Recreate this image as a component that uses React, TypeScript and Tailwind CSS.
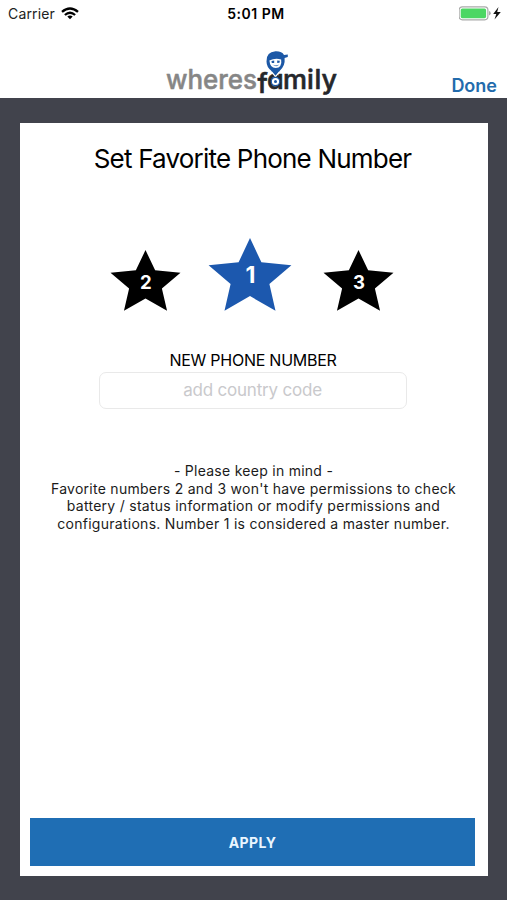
import { useState } from "react";

interface FavoriteStarProps {
  slot: number;
  active: boolean;
  onSelect: (slot: number) => void;
}

// Five-pointed star with its slot number; the active one is larger and blue.
function FavoriteStar({ slot, active, onSelect }: FavoriteStarProps) {
  return (
    <button
      type="button"
      onClick={() => onSelect(slot)}
      className={active ? "mr-1 h-[73px] w-[84px]" : "h-[61px] w-[71px]"}
    >
      <svg viewBox="0 0 84 72" preserveAspectRatio="none" className="block h-full w-full">
        <path
          d="M42 0 L53.4 24 L83.4 26.8 L61.4 45.3 L67.5 71.8 L42 57.3 L16.5 71.8 L22.6 45.3 L0.6 26.8 L30.6 24 Z"
          fill={active ? "#1c58ae" : "#000"}
        />
        <text
          x="42.5"
          y={active ? 44.5 : 45.5}
          fill="#fff"
          textAnchor="middle"
          className={
            active
              ? "font-['Inter',sans-serif] text-[23px] font-bold"
              : "font-['Inter',sans-serif] text-[22px] font-bold"
          }
        >
          {slot}
        </text>
      </svg>
    </button>
  );
}

function WifiIcon() {
  return (
    <svg viewBox="0 0 18 13" className="h-[13px] w-[18px]" fill="none" stroke="#000" strokeWidth="2.3">
      <path d="M1 4.9 Q9 -2 17 4.9" />
      <path d="M3.9 8 Q9 3.5 14.1 8" />
      <path d="M9 12.3 L6.3 9.6 Q9 7.5 11.7 9.6 Z" fill="#000" stroke="none" />
    </svg>
  );
}

function BatteryIcon() {
  return (
    <svg viewBox="0 0 44 15" className="h-[15px] w-[44px]">
      <rect x="0.1" y="0.8" width="28.8" height="13" rx="3.2" fill="#fff" stroke="#a9aaa9" strokeWidth="1.2" />
      <rect x="1.7" y="2.4" width="25.4" height="9.8" rx="1.6" fill="#4cd763" />
      <path d="M30 5 Q31.8 5.6 31.8 7.2 Q31.8 8.8 30 9.4 Z" fill="#a9aaa9" />
      <path d="M39.5 1 L34.2 7.9 L37.3 7.9 L35.5 13.6 L41.8 6.1 L38.2 6.1 Z" fill="#111" />
    </svg>
  );
}

function Logo() {
  return (
    <svg viewBox="0 0 174 48" className="h-[48px] w-[174px] overflow-visible">
      <g
        className="font-['Inter',sans-serif] text-[27px] font-medium [font-feature-settings:'cv11']"
        strokeLinejoin="round"
      >
        <text x="1" y="40" textLength="91" lengthAdjust="spacingAndGlyphs" fill="#868686" stroke="#868686" strokeWidth="0.5">
          wheres
        </text>
        {/* the f hangs below the baseline */}
        <text
          x="92.5 102 118 142 149.5 156.5"
          y="43.5 40 40 40 40 40"
          fill="#25272b"
          stroke="#25272b"
          strokeWidth="0.6"
        >
          family
        </text>
      </g>
      {/* map pin wearing a cap */}
      <path
        d="M101.5 12.5 Q101 3 110.5 2.3 Q117 2.1 119 6 L122.8 5.4 L122.8 8 L119.6 9 Q120.4 16.5 115 21.5 L110.5 28 L106 21.5 Q101.6 18 101.5 12.5 Z"
        fill="#1c58a6"
      />
      <path d="M104.4 11.4 Q110 8.8 116.2 10.4 Q117.2 18.8 110.7 19 Q105 18.8 104.4 11.4 Z" fill="#fff" />
      <path d="M106.5 12 L109.2 11.6 L109.2 14 L106.8 14 Z M112.2 11.6 L114.8 11.8 L114.5 13.8 L112.2 14 Z" fill="#1c58a6" />
      <path d="M107.5 15.6 Q111 17.4 114.2 15.4 Q111.5 18.8 107.5 15.6 Z" fill="#1c58a6" />
      <path d="M106.5 22.8 L110.5 27.6 L114.5 22.8" fill="none" stroke="#fff" strokeWidth="1.3" />
      <circle cx="110.5" cy="32.5" r="4.2" fill="#fff" stroke="#1c58a6" strokeWidth="1.2" />
      <circle cx="110.5" cy="32.5" r="1.5" fill="#1c58a6" />
    </svg>
  );
}

export default function App() {
  const [selected, setSelected] = useState(1);
  const [phone, setPhone] = useState("");

  return (
    <div className="flex h-[900px] w-[507px] flex-col bg-[#41434c] font-['Inter',sans-serif] text-black">
      <header className="flex h-[98px] flex-col bg-white">
        <div className="grid h-[27px] grid-cols-3 items-center pl-2 pr-1">
          <div className="flex items-center gap-1.5 text-[14px] tracking-[0.15px] text-[#222]">
            <span>Carrier</span>
            <WifiIcon />
          </div>
          <span className="pl-px text-center text-[14px] font-semibold tracking-[0.5px]">5:01 PM</span>
          <div className="flex justify-end">
            <BatteryIcon />
          </div>
        </div>
        <div className="grid flex-1 grid-cols-[165px_174px_1fr] items-start pt-[22px]">
          <div />
          <Logo />
          <button
            type="button"
            className="justify-self-end pr-2.5 pt-[25px] text-[18px] font-semibold leading-6 text-[#226bac]"
          >
            Done
          </button>
        </div>
      </header>

      <main className="mb-6 ml-5 mr-[19px] mt-[25px] flex flex-1 flex-col bg-white pb-2.5 pl-2.5 pr-[13px]">
        <h1 className="pt-5 text-center text-[26px] leading-8 tracking-[-0.8px]">
          Set Favorite Phone Number
        </h1>

        <div className="mt-[63px] flex h-[73px] items-end justify-center gap-[27px] pr-px">
          {[2, 1, 3].map((slot) => (
            <FavoriteStar key={slot} slot={slot} active={slot === selected} onSelect={setSelected} />
          ))}
        </div>

        <label
          className="mt-[38px] pl-px text-center text-[16px] leading-[22px] tracking-[-0.25px]"
          htmlFor="phone"
        >
          NEW PHONE NUMBER
        </label>
        <input
          id="phone"
          type="tel"
          value={phone}
          onChange={(e) => setPhone(e.target.value)}
          placeholder="add country code"
          className="mt-px h-[37px] w-[308px] self-center rounded-[7px] border border-[#e9e9e9] pb-0.5 text-center text-[17px] tracking-[-0.2px] placeholder:text-[#c9c9cc] focus:outline-none"
        />

        <p className="mt-[53px] whitespace-nowrap pl-0.5 text-center text-[14px] leading-[17.5px] tracking-[0.27px] text-[#1b1b1b]">
          - Please keep in mind -
          <br />
          Favorite numbers 2 and 3 won't have permissions to check
          <br />
          battery / status information or modify permissions and
          <br />
          configurations. Number 1 is considered a master number.
        </p>

        <button
          type="button"
          className="mt-auto h-12 bg-[#1f6eb4] text-[14px] font-bold tracking-[0.4px] text-[#eaf6ff]"
        >
          APPLY
        </button>
      </main>
    </div>
  );
}
